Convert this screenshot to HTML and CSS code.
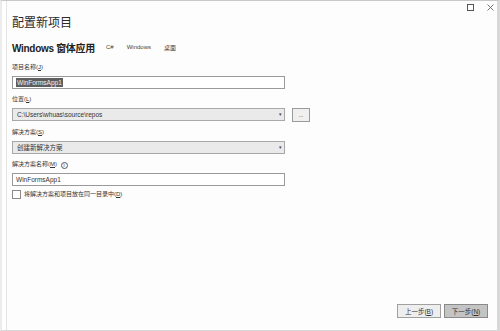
FILE: index.html
```html
<!DOCTYPE html>
<html>
<head>
    <title>配置新项目</title>
    <link rel="stylesheet" href="styles.css">
</head>
<body>
    <div class="window">
        <div class="titlebar">
            <span class="win-btn">
                <svg width="7" height="7" viewBox="0 0 7 7"><rect x="0.5" y="0.5" width="6" height="6" fill="none" stroke="#555" stroke-width="1"/></svg>
            </span>
            <span class="win-btn">
                <svg width="7" height="7" viewBox="0 0 7 7"><path d="M0.5 0.5 L6.5 6.5 M6.5 0.5 L0.5 6.5" stroke="#666" stroke-width="0.9"/></svg>
            </span>
        </div>
        <div class="content">
            <h1 class="header">配置新项目</h1>
            <div class="subtitle">
                <span class="app-name">Windows 窗体应用</span>
                <span class="tag">C#</span>
                <span class="tag">Windows</span>
                <span class="tag">桌面</span>
            </div>

            <div class="field first">
                <label class="label">项目名称(<u>J</u>)</label>
                <div class="input"><span class="selected">WinFormsApp1</span></div>
            </div>

            <div class="field">
                <label class="label">位置(<u>L</u>)</label>
                <div class="row">
                    <div class="select">C:\Users\whuas\source\repos<span class="arrow">▾</span></div>
                    <div class="browse">...</div>
                </div>
            </div>

            <div class="field">
                <label class="label">解决方案(<u>S</u>)</label>
                <div class="select">创建新解决方案<span class="arrow">▾</span></div>
            </div>

            <div class="field">
                <label class="label">解决方案名称(<u>M</u>) <span class="info">i</span></label>
                <div class="input">WinFormsApp1</div>
            </div>

            <div class="check-row">
                <span class="checkbox"></span>
                <span class="label">将解决方案和项目放在同一目录中(<u>D</u>)</span>
            </div>
        </div>
        <div class="footer">
            <button class="btn">上一步(<u>B</u>)</button>
            <button class="btn primary">下一步(<u>N</u>)</button>
        </div>
    </div>
</body>
</html>
```

FILE: styles.css
```css
body {
    margin: 0;
    background-color: #ffffff;
    font-family: "Liberation Sans", "Noto Sans CJK SC", sans-serif;
    color: #333333;
}

.window {
    box-sizing: border-box;
    height: 331px;
    width: 500px;
    background-color: #fdfdfd;
    border-top: 1px solid #c8c8c8;
    border-left: 2px solid #ececec;
    border-right: 3px solid #d8d8d8;
    border-bottom: 1px solid #d8d8d8;
    box-shadow: inset 4px 0 0 #ffffff, inset 5px 0 0 #e4e4e4;
    display: flex;
    flex-direction: column;
}

.titlebar {
    height: 11px;
    display: flex;
    justify-content: flex-end;
    align-items: flex-start;
    padding-top: 3px;
    gap: 13px;
    padding-right: 3px;
}

.win-btn {
    width: 7px;
    height: 7px;
    display: flex;
}

.content {
    padding-left: 10px;
    flex: 1;
}

.header {
    font-size: 12px;
    font-weight: normal;
    line-height: 16px;
    margin: 0;
    color: #2a2a2a;
}

.subtitle {
    margin-top: 9px;
    height: 14px;
    display: flex;
    align-items: center;
}

.app-name {
    font-size: 10px;
    font-weight: bold;
    color: #222222;
    margin-right: 11px;
    letter-spacing: -0.3px;
}

.tag {
    font-size: 6px;
    color: #444444;
    margin-right: 13px;
}

.field {
    margin-top: 5px;
    width: 300px;
}

.field.first {
    margin-top: 8px;
}

.label {
    display: block;
    font-size: 6px;
    line-height: 10px;
    color: #333333;
}

.info {
    display: inline-block;
    box-sizing: border-box;
    width: 7px;
    height: 7px;
    border: 1px solid #555555;
    border-radius: 50%;
    font-size: 5px;
    line-height: 5px;
    text-align: center;
    margin-left: 2px;
    vertical-align: -1px;
}

.input,
.select {
    box-sizing: border-box;
    width: 273px;
    height: 13px;
    margin-top: 4px;
    border: 1px solid #9a9a9a;
    background-color: #ffffff;
    font-size: 6.5px;
    line-height: 11px;
    padding-left: 3px;
}

.selected {
    background-color: #5e5e5e;
    color: #f4f4f4;
    padding: 1px 1px;
}

.select {
    background-color: #eaeaea;
    border-color: #a8a8a8;
    position: relative;
    padding-left: 4px;
}

.arrow {
    position: absolute;
    right: 2px;
    top: 0;
    font-size: 5px;
    color: #444444;
}

.row {
    display: flex;
    align-items: flex-start;
    gap: 7px;
}

.browse {
    box-sizing: border-box;
    width: 18px;
    height: 14px;
    margin-top: 4px;
    border: 1px solid #9a9a9a;
    background-color: #f0f0f0;
    font-size: 6px;
    line-height: 12px;
    text-align: center;
}

.check-row {
    display: flex;
    align-items: center;
    margin-top: 3px;
    gap: 3px;
}

.checkbox {
    box-sizing: border-box;
    width: 9px;
    height: 9px;
    border: 1px solid #8a8a8a;
    background-color: #ffffff;
}

.footer {
    display: flex;
    justify-content: flex-end;
    gap: 3px;
    padding-right: 9px;
    padding-bottom: 12px;
}

.btn {
    box-sizing: border-box;
    width: 44px;
    height: 14px;
    border: 1px solid #a0a0a0;
    background-color: #eeeeee;
    font-family: "Liberation Sans", "Noto Sans CJK SC", sans-serif;
    font-size: 6.5px;
    color: #333333;
    padding: 0;
}

.btn.primary {
    background-color: #c4c4c4;
    border-color: #8a8a8a;
}
```
